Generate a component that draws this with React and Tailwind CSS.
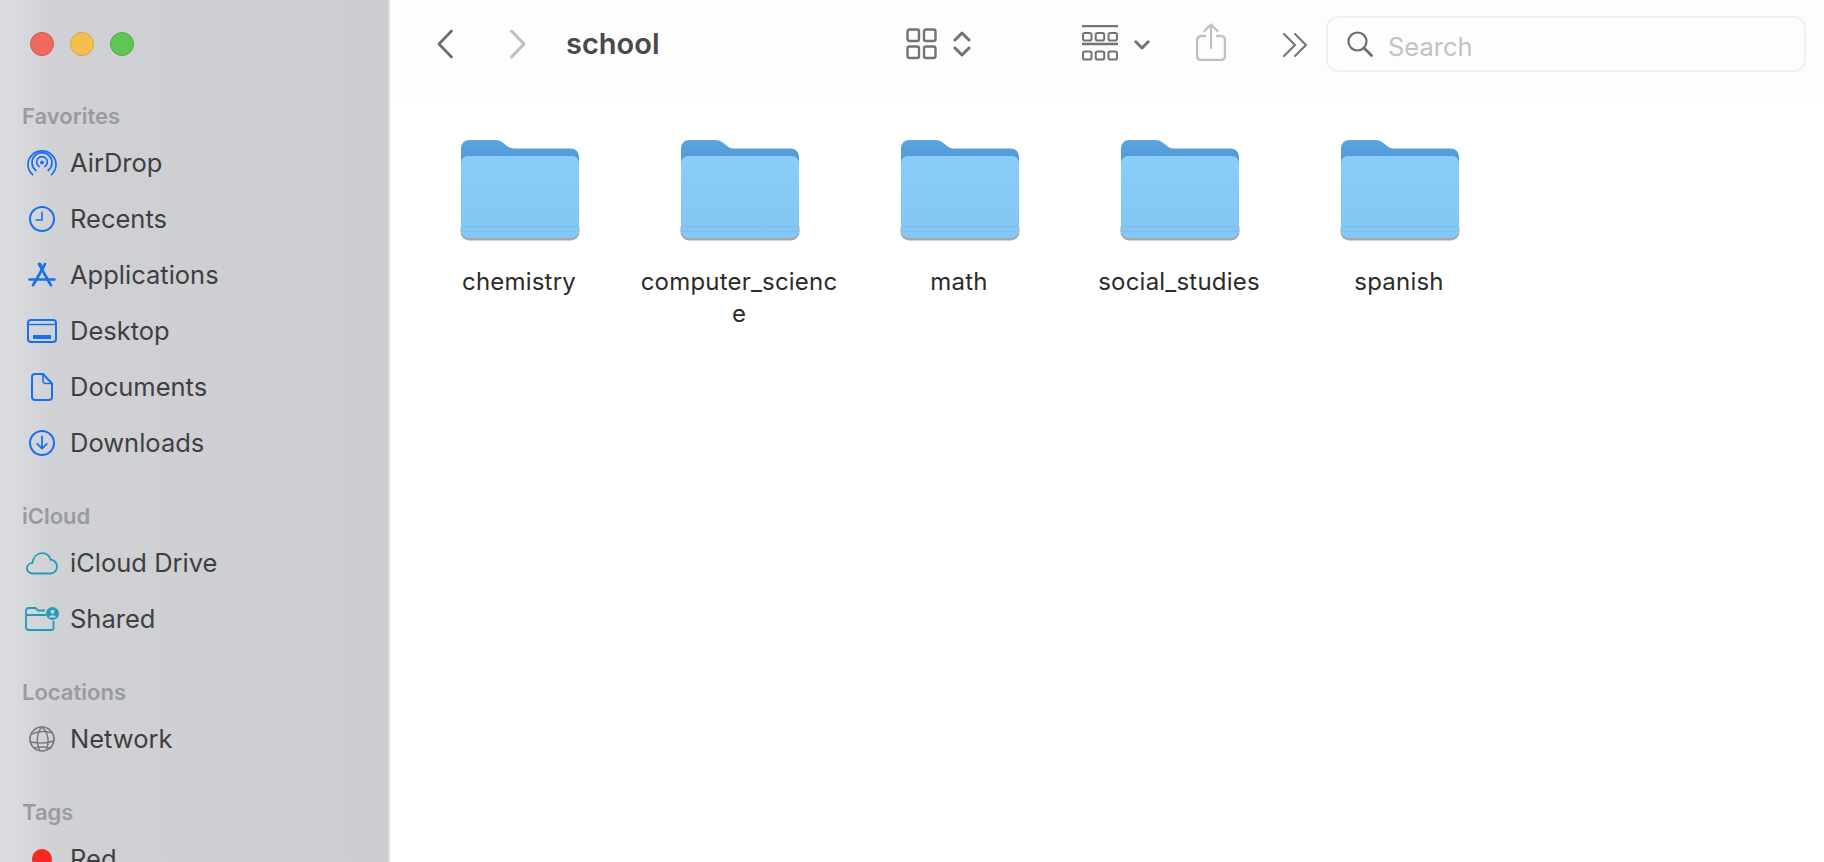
const blue = "#1a6ff0";
const teal = "#1f9db8";

function I({ w, h, vb, children, className = "" }) {
  return (
    <svg width={w} height={h} viewBox={vb || `0 0 ${w} ${h}`} fill="none" className={`shrink-0 ${className}`}>
      {children}
    </svg>
  );
}

const AirDrop = () => (
  <I w={30} h={28}>
    <g stroke={blue} strokeWidth="1.700" strokeLinecap="round">
      <circle cx="15" cy="13.500" r="1.500" fill={blue} strokeWidth="1" />
      <path d="M12 17.500a5.400 5.400 0 1 1 6 0" />
      <path d="M8.800 21.500a10 10 0 1 1 12.400 0" />
      <path d="M5.600 25.600a14 13.600 0 1 1 18.800 0" />
    </g>
  </I>
);
const Recents = () => (
  <I w={28} h={28}>
    <circle cx="14" cy="14" r="12" stroke={blue} strokeWidth="2" />
    <path d="M14 6.500v8.500H7.500" stroke={blue} strokeWidth="1.600" />
  </I>
);
const Apps = () => (
  <I w={28} h={26}>
    <g stroke={blue} strokeWidth="2.600" strokeLinecap="round">
      <path d="M1.500 17.500h25" />
      <path d="M12 2l2.200 4" />
      <path d="M17 2L7 20" />
      <path d="M11 2l10 18" />
      <path d="M7 20l-2 3.200" />
      <path d="M21 20l2 3.200" />
    </g>
  </I>
);
const Desktop = () => (
  <I w={30} h={24}>
    <rect x="1" y="1" width="28" height="22" rx="3" stroke={blue} strokeWidth="2" />
    <path d="M1 5.500h28" stroke={blue} strokeWidth="1.400" />
    <rect x="6" y="16" width="18" height="4" fill={blue} />
  </I>
);
const Doc = () => (
  <I w={22} h={28}>
    <path d="M4 1h8l9 9.500V24a3 3 0 0 1-3 3H4a3 3 0 0 1-3-3V4a3 3 0 0 1 3-3z" stroke={blue} strokeWidth="2" />
    <path d="M12 1v7a2.500 2.500 0 0 0 2.500 2.500H21" stroke={blue} strokeWidth="1.600" />
  </I>
);
const Down = () => (
  <I w={28} h={28}>
    <circle cx="14" cy="14" r="12" stroke={blue} strokeWidth="2" />
    <path d="M14 7.500v12M9.200 14.800L14 19.600l4.800-4.800" stroke={blue} strokeWidth="1.800" strokeLinecap="round" strokeLinejoin="round" />
  </I>
);
const Cloud = () => (
  <I w={32} h={23}>
    <path
      d="M7 21.500C3.400 21.500 1 19.200 1 16.300c0-2.900 2.300-5 5.200-5.100C7.400 4.800 11.400 1.200 16 1.200c4.200 0 7.400 2.600 8.600 6.400 3.700.3 6.400 3.400 6.400 7 0 3.900-3 6.900-6.900 6.900H7z"
      stroke={teal}
      strokeWidth="1.800"
    />
  </I>
);
const Shared = () => (
  <I w={34} h={24}>
    <path d="M1 4a3 3 0 0 1 3-3h6.500l2.500 2.500h7M1 8h20M1 4v16a3 3 0 0 0 3 3h23a1.500 1.500 0 0 0 1.500-1.500V14" stroke={teal} strokeWidth="1.800" />
    <circle cx="27.500" cy="6.500" r="6.500" fill={teal} />
    <circle cx="27.500" cy="4.800" r="2" fill="#d2d3d6" />
    <path d="M23.800 10.500a3.800 3 0 0 1 7.400 0z" fill="#d2d3d6" />
  </I>
);
const Globe = () => (
  <I w={28} h={28}>
    <g stroke="#77787b" strokeWidth="1.400">
      <circle cx="14" cy="14" r="12" strokeWidth="1.700" />
      <path d="M3 9.500c6-3.500 15-4 22-1.500M2.500 17c7 1.500 16 1.500 23-1M5.500 23c5-1 13-1.500 18 .5" />
      <path d="M14 2c-5 5-6.500 15-2 24M14 2c6 5 8 15 4 23.500" />
    </g>
  </I>
);

function Row({ icon, label }) {
  return (
    <div className="h-[56px] flex items-center shrink-0">
      <div className="w-[70px] flex items-center justify-center pl-[13px]">{icon}</div>
      <span className="text-[25.500px] text-[#3f3f41] leading-none -mt-[1px]">{label}</span>
    </div>
  );
}

function Head({ label, className = "" }) {
  return (
    <div className={`h-[38px] flex items-center pl-[22px] text-[22px] font-semibold text-[#9a9b9f] shrink-0 ${className}`}>
      {label}
    </div>
  );
}

function Folder() {
  return (
    <svg width="122" height="106" viewBox="0 0 122 106" fill="none">
      <defs>
        <linearGradient id="fb" x1="0" y1="0" x2="0" y2="1">
          <stop offset="0" stopColor="#5aa4de" />
          <stop offset="1" stopColor="#4a92d4" />
        </linearGradient>
        <linearGradient id="ff" x1="0" y1="0" x2="0" y2="1">
          <stop offset="0" stopColor="#8acdf8" />
          <stop offset="1" stopColor="#83c6f5" />
        </linearGradient>
      </defs>
      <path d="M1.500 90h119v5a8.500 8.500 0 0 1-8.500 8.500H10A8.500 8.500 0 0 1 1.500 95z" fill="#7d8288" opacity="0.7" />
      <path
        d="M2 11a8 8 0 0 1 8-8h26c4 0 6 1 9 3.500 3.500 3 6 5 10.500 5H112a8 8 0 0 1 8 8V40H2z"
        fill="url(#fb)"
      />
      <path d="M2 26a7 7 0 0 1 7-7h104a7 7 0 0 1 7 7v67a8 8 0 0 1-8 8H10a8 8 0 0 1-8-8z" fill="url(#ff)" />
      <path d="M2 89h118v4a8 8 0 0 1-8 8H10a8 8 0 0 1-8-8z" fill="#7cbeef" />
      <path d="M2 90.500h118v2.500a8 8 0 0 1-8 8H10a8 8 0 0 1-8-8z" fill="#84c6f4" />
      <path d="M2 94.500h118" stroke="#7cbeef" strokeWidth="1" />
    </svg>
  );
}

function Item({ name }) {
  return (
    <div className="w-[220px] flex flex-col items-center shrink-0">
      <Folder />
      <div className="w-[198px] mt-[23px] mr-[2px] text-center text-[24px] tracking-[0.2px] leading-[32px] text-[#2b2b2b] [overflow-wrap:anywhere]">
        {name}
      </div>
    </div>
  );
}

export default function App() {
  return (
    <div className="flex h-[862px] w-[1824px] overflow-hidden bg-white font-['Inter','Liberation_Sans',sans-serif]">
      <aside className="w-[390px] shrink-0 h-full flex flex-col border-r-[2px] border-[#dfdfe1] bg-gradient-to-r from-[#dddee0] via-[#d0d1d5] via-[14%] to-[#cccdd1]">
        <div className="h-[97px] shrink-0 flex items-start gap-[16px] pl-[30px] pt-[32px]">
          <span className="w-[24px] h-[24px] rounded-full bg-[#ee6a5f] border border-[#d9574c]" />
          <span className="w-[24px] h-[24px] rounded-full bg-[#f6bd4f] border border-[#dfa53c]" />
          <span className="w-[24px] h-[24px] rounded-full bg-[#61c554] border border-[#50ac44]" />
        </div>
        <Head label="Favorites" />
        <Row icon={<AirDrop />} label="AirDrop" />
        <Row icon={<Recents />} label="Recents" />
        <Row icon={<Apps />} label="Applications" />
        <Row icon={<Desktop />} label="Desktop" />
        <Row icon={<Doc />} label="Documents" />
        <Row icon={<Down />} label="Downloads" />
        <Head label="iCloud" className="mt-[26px]" />
        <Row icon={<Cloud />} label="iCloud Drive" />
        <Row icon={<Shared />} label="Shared" />
        <Head label="Locations" className="mt-[26px]" />
        <Row icon={<Globe />} label="Network" />
        <Head label="Tags" className="mt-[26px]" />
        <Row icon={<span className="w-[20px] h-[20px] rounded-full bg-[#f5291f] block" />} label="Red" />
      </aside>

      <main className="flex-1 min-w-0 flex flex-col">
        <header className="h-[97px] shrink-0 bg-[#fdfdfd] flex items-center">
          <I w={18} h={30} className="ml-[46px] -mt-[10px]">
            <path d="M15.500 2L3 15l12.500 13" stroke="#6e6e6e" strokeWidth="2.800" strokeLinecap="round" strokeLinejoin="round" />
          </I>
          <I w={18} h={30} className="ml-[55px] -mt-[10px]">
            <path d="M2.500 2L15 15 2.500 28" stroke="#bdbdbd" strokeWidth="2.800" strokeLinecap="round" strokeLinejoin="round" />
          </I>
          <span className="ml-[39px] w-[95px] text-[29px] font-semibold text-[#4a4a4a] -mt-[11px] leading-none">school</span>

          <I w={31} h={32} className="ml-[245px] -mt-[9px]">
            <g stroke="#737373" strokeWidth="2.400">
              <rect x="1.500" y="1.500" width="11.500" height="11.500" rx="2" />
              <rect x="18" y="1.500" width="11.500" height="11.500" rx="2" />
              <rect x="1.500" y="18.500" width="11.500" height="11.500" rx="2" />
              <rect x="18" y="18.500" width="11.500" height="11.500" rx="2" />
            </g>
          </I>
          <I w={18} h={26} className="ml-[16px] -mt-[9px]">
            <path d="M2 9l7-7 7 7M2 17l7 7 7-7" stroke="#737373" strokeWidth="3" strokeLinecap="round" strokeLinejoin="round" />
          </I>

          <I w={36} h={36} className="ml-[111px] -mt-[11px]">
            <g stroke="#737373">
              <path d="M0 1h36M0 19h36" strokeWidth="2.400" />
              <rect x="1" y="8" width="8.500" height="7.500" rx="1.800" strokeWidth="2" />
              <rect x="13.700" y="8" width="8.500" height="7.500" rx="1.800" strokeWidth="2" />
              <rect x="26.500" y="8" width="8.500" height="7.500" rx="1.800" strokeWidth="2" />
              <rect x="1" y="26.500" width="8.500" height="8" rx="1.800" strokeWidth="2" />
              <rect x="13.700" y="26.500" width="8.500" height="8" rx="1.800" strokeWidth="2" />
              <rect x="26.500" y="26.500" width="8.500" height="8" rx="1.800" strokeWidth="2" />
            </g>
          </I>
          <I w={16} h={10} className="ml-[16px] -mt-[8px]">
            <path d="M1.800 1.800L8 8l6.200-6.200" stroke="#737373" strokeWidth="3" strokeLinecap="round" strokeLinejoin="round" />
          </I>

          <I w={30} h={38} className="ml-[46px] -mt-[14px]">
            <g stroke="#c0c0c0" strokeWidth="2.400" strokeLinecap="round" strokeLinejoin="round">
              <path d="M9 13H5a4 4 0 0 0-4 4v16a4 4 0 0 0 4 4h20a4 4 0 0 0 4-4V17a4 4 0 0 0-4-4h-4" />
              <path d="M15 25V2" strokeWidth="2.200" />
              <path d="M8.500 8L15 1.500 21.500 8" strokeWidth="2.200" />
            </g>
          </I>

          <I w={24} h={24} className="ml-[57px] -mt-[7px]">
            <path d="M1 1l11 11L1 23M12 1l11 11-11 11" stroke="#737373" strokeWidth="2" strokeLinecap="round" strokeLinejoin="round" />
          </I>

          <div className="ml-[19px] w-[480px] h-[56px] -mt-[9px] rounded-[12px] border-[2px] border-[#f0f0f0] flex items-center pl-[19px]">
            <I w={26} h={26}>
              <circle cx="10.500" cy="10.500" r="9" stroke="#6e6e6e" strokeWidth="2.200" />
              <path d="M17 17l7.500 7.500" stroke="#6e6e6e" strokeWidth="2.800" strokeLinecap="round" />
            </I>
            <span className="ml-[15px] text-[25.500px] text-[#c2c2c2] leading-none mt-[6px]">Search</span>
          </div>
        </header>

        <section className="flex-1 bg-white flex items-start pl-[20px] pt-[40px]">
          <Item name="chemistry" />
          <Item name="computer_science" />
          <Item name="math" />
          <Item name="social_studies" />
          <Item name="spanish" />
        </section>
      </main>
    </div>
  );
}
